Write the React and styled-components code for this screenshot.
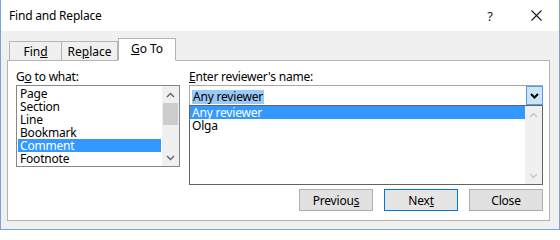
import styled, { createGlobalStyle } from 'styled-components'

const GlobalStyle = createGlobalStyle`
  html, body {
    margin: 0;
    padding: 0;
    background: #ffffff;
  }
  body {
    font-family: 'Noto Sans', 'Open Sans', 'DejaVu Sans', sans-serif;
    font-size: 12px;
    color: #000000;
  }
  * {
    box-sizing: border-box;
  }
`

// 창 틀
const Window = styled.div`
  width: 560px;
  height: 230px;
  display: flex;
  flex-direction: column;
  border: 1px solid #7aa3d6;
  border-top: none;
  background: #f0f0f0;
`

const TitleBar = styled.div`
  height: 31px;
  flex: none;
  display: flex;
  align-items: center;
  justify-content: space-between;
  background: #ffffff;
  padding: 0 0 0 8px;
`

const Title = styled.span`
  font-size: 12px;
  letter-spacing: -0.2px;
`

const TitleButtons = styled.div`
  display: flex;
  align-items: center;
  height: 100%;
`

const TitleButton = styled.div`
  width: 46px;
  height: 100%;
  display: flex;
  align-items: center;
  justify-content: center;
  font-size: 13px;
  color: #1a1a1a;
`

const Body = styled.div`
  flex: 1;
  display: flex;
  flex-direction: column;
  padding: 7px 9px 8px 6px;
`

// 탭
const TabStrip = styled.div`
  display: flex;
  align-items: flex-end;
  padding-left: 2px;
  height: 22px;
  position: relative;
  z-index: 1;
`

const Tab = styled.div`
  height: ${(p) => (p.active ? '23px' : '20px')};
  width: ${(p) => p.w}px;
  margin-bottom: -1px;
  margin-left: ${(p) => (p.active ? '0' : '-1px')};
  display: flex;
  align-items: center;
  justify-content: center;
  padding-bottom: ${(p) => (p.active ? '2px' : '0')};
  background: ${(p) => (p.active ? '#ffffff' : '#f0f0f0')};
  border: 1px solid #b4b4b4;
  border-bottom: ${(p) => (p.active ? '1px solid #ffffff' : '1px solid #b4b4b4')};
  &:first-child {
    margin-left: 0;
  }
`

const Panel = styled.div`
  flex: 1;
  background: #ffffff;
  border: 1px solid #b4b4b4;
  padding: 8px 6px 0 8px;
  display: grid;
  grid-template-columns: 164px 354px;
  column-gap: 9px;
`

const Column = styled.div`
  display: flex;
  flex-direction: column;
`

const Label = styled.div`
  height: 15px;
  line-height: 15px;
  margin-bottom: 1px;
  letter-spacing: -0.2px;
`

// 왼쪽 목록
const ListBox = styled.div`
  height: 82px;
  border: 1px solid #828790;
  display: flex;
  background: #ffffff;
`

const ListItems = styled.div`
  flex: 1;
  padding: 1px;
`

const Row = styled.div`
  height: 13px;
  line-height: 13px;
  padding-left: ${(p) => p.indent || 2}px;
  background: ${(p) => (p.selected ? '#3399ff' : 'transparent')};
  color: ${(p) => (p.selected ? '#ffffff' : '#000000')};
  white-space: nowrap;
  letter-spacing: -0.2px;
`

const ScrollBar = styled.div`
  width: 17px;
  flex: none;
  background: #f0f0f0;
  display: flex;
  flex-direction: column;
`

const ScrollArrow = styled.div`
  height: 17px;
  display: flex;
  align-items: center;
  justify-content: center;
`

const ScrollTrack = styled.div`
  flex: 1;
  display: flex;
  flex-direction: column;
`

const Thumb = styled.div`
  height: 22px;
  margin: 0 1px;
  background: #cdcdcd;
`

// 오른쪽 콤보
const Combo = styled.div`
  height: 20px;
  border: 1px solid #a8a8a8;
  border-bottom: none;
  display: flex;
  align-items: stretch;
  background: #ffffff;
`

const ComboText = styled.div`
  flex: 1;
  padding: 2px 0 0 2px;
`

const SelectedText = styled.span`
  display: inline-block;
  height: 14px;
  line-height: 13px;
  padding: 0 1px;
  background: #99c9f7;
  letter-spacing: -0.2px;
`

const DropButton = styled.div`
  width: 17px;
  background: #cce4f7;
  border: 1px solid #569de5;
  margin: 0 -1px 0 0;
  display: flex;
  align-items: center;
  justify-content: center;
`

const DropList = styled.div`
  height: 80px;
  border: 1px solid #646464;
  display: flex;
  background: #ffffff;
`

const Buttons = styled.div`
  display: flex;
  justify-content: flex-end;
  gap: 11px;
  margin-top: 4px;
`

const Button = styled.div`
  width: 74px;
  height: 22px;
  display: flex;
  align-items: center;
  justify-content: center;
  background: ${(p) => (p.primary ? '#e5e5e5' : '#e1e1e1')};
  border: 1px solid ${(p) => (p.primary ? '#0078d7' : '#adadad')};
  letter-spacing: -0.2px;
`

const Chevron = ({ up, color = '#606060', bold }) => (
  <svg width="9" height="6" viewBox="0 0 9 6">
    <polyline
      points={up ? '1,5 4.5,1.5 8,5' : '1,1 4.5,4.5 8,1'}
      fill="none"
      stroke={color}
      strokeWidth={bold ? 2 : 1.3}
    />
  </svg>
)

export default function App() {
  const targets = ['Page', 'Section', 'Line', 'Bookmark', 'Comment', 'Footnote']
  return (
    <>
      <GlobalStyle />
      <Window>
        <TitleBar>
          <Title>Find and Replace</Title>
          <TitleButtons>
            <TitleButton>?</TitleButton>
            <TitleButton>
              <svg width="11" height="11" viewBox="0 0 11 11">
                <path d="M0.5 0.5 L10.5 10.5 M10.5 0.5 L0.5 10.5" stroke="#1a1a1a" strokeWidth="1.1" />
              </svg>
            </TitleButton>
          </TitleButtons>
        </TitleBar>
        <Body>
          <TabStrip>
            <Tab w={53}>
              Fin<u>d</u>
            </Tab>
            <Tab w={57}>
              Re<u>p</u>lace
            </Tab>
            <Tab w={58} active>
              <u>G</u>o To
            </Tab>
          </TabStrip>
          <Panel>
            <Column>
              <Label>
                G<u>o</u> to what:
              </Label>
              <ListBox>
                <ListItems>
                  {targets.map((t) => (
                    <Row key={t} selected={t === 'Comment'}>
                      {t}
                    </Row>
                  ))}
                </ListItems>
                <ScrollBar>
                  <ScrollArrow>
                    <Chevron up />
                  </ScrollArrow>
                  <ScrollTrack>
                    <Thumb />
                  </ScrollTrack>
                  <ScrollArrow>
                    <Chevron />
                  </ScrollArrow>
                </ScrollBar>
              </ListBox>
            </Column>
            <Column>
              <Label>
                <u>E</u>nter reviewer's name:
              </Label>
              <Combo>
                <ComboText>
                  <SelectedText>Any reviewer</SelectedText>
                </ComboText>
                <DropButton>
                  <Chevron color="#000000" bold />
                </DropButton>
              </Combo>
              <DropList>
                <ListItems style={{ padding: 0 }}>
                  <Row selected indent={2}>
                    Any reviewer
                  </Row>
                  <Row indent={2}>Olga</Row>
                </ListItems>
                <ScrollBar>
                  <ScrollArrow>
                    <Chevron up color="#c5c5c5" />
                  </ScrollArrow>
                  <ScrollTrack />
                  <ScrollArrow>
                    <Chevron color="#c5c5c5" />
                  </ScrollArrow>
                </ScrollBar>
              </DropList>
              <Buttons>
                <Button>
                  Previou<u>s</u>
                </Button>
                <Button primary>
                  Nex<u>t</u>
                </Button>
                <Button>Close</Button>
              </Buttons>
            </Column>
          </Panel>
        </Body>
      </Window>
    </>
  )
}
